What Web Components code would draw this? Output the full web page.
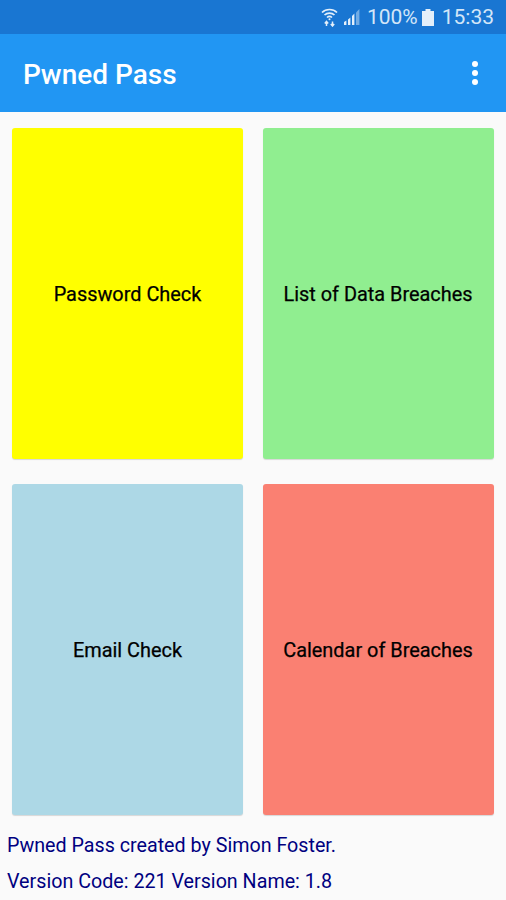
<!DOCTYPE html>
<html>
<head>
<meta charset="utf-8">
<title>Pwned Pass</title>
<style>
html, body { margin: 0; padding: 0; }
body { width: 506px; height: 900px; overflow: hidden; background: #fafafa; font-family: Roboto, sans-serif; }
app-screen { height: 900px; }
</style>
</head>
<body>
<app-screen>
    <status-bar></status-bar>
    <app-bar title="Pwned Pass"></app-bar>
    <card-grid>
        <menu-card color="#ffff00">Password Check</menu-card>
        <menu-card color="#90ee90">List of Data Breaches</menu-card>
        <menu-card color="#add8e6">Email Check</menu-card>
        <menu-card color="#fa8072">Calendar of Breaches</menu-card>
    </card-grid>
    <app-footer>
        <span>Pwned Pass created by Simon Foster.</span>
        <span>Version Code: 221 Version Name: 1.8</span>
    </app-footer>
</app-screen>
<script>
class AppScreen extends HTMLElement {
    constructor() {
        super();
        this.attachShadow({ mode: 'open' });
        this.shadowRoot.innerHTML = `
<style>
:host { display: flex; flex-direction: column; }
</style>
<slot></slot>`;
    }
}

class StatusBar extends HTMLElement {
    constructor() {
        super();
        this.attachShadow({ mode: 'open' });
        this.shadowRoot.innerHTML = `
<style>
:host {
    display: flex;
    align-items: center;
    justify-content: flex-end;
    height: 34px;
    flex: none;
    background: #1976d2;
    color: #d3e6f8;
    font-size: 21px;
    padding-right: 12px;
}
svg { display: block; flex: none; }
.wifi { margin-right: 6px; }
.signal { margin-right: 6px; }
.battery { margin: 0 8px 0 4px; }
</style>
<svg class="wifi" width="17" height="20" viewBox="0 0 17 20" fill="none" stroke="#e3effa" stroke-width="1.7">
    <path d="M1 5.5 C5 1.5 12 1.5 16 5.5"/>
    <path d="M3.5 8 C6.2 5.4 10.8 5.4 13.5 8"/>
    <path d="M6 10.5 C7.4 9.2 9.6 9.2 11 10.5"/>
    <circle cx="8.5" cy="12.3" r="1" fill="#e3effa" stroke="none"/>
    <path d="M5.5 14.5 V19 M3.8 16.5 L5.5 14.5 L7.2 16.5 M11.5 14.5 V19 M9.8 17 L11.5 19 L13.2 17" stroke-width="1.5"/>
</svg>
<svg class="signal" width="17" height="16" viewBox="0 0 17 16" fill="#e3effa">
    <path d="M0 13 L2.4 11.5 V16 H0 Z"/>
    <path d="M4 10.5 L6.4 8.5 V16 H4 Z"/>
    <path d="M8 7 L10.4 4.5 V16 H8 Z"/>
    <path d="M12 3.5 L15.4 0 V16 H12 Z" opacity="0.45"/>
</svg>
<span>100%</span>
<svg class="battery" width="12" height="17" viewBox="0 0 12 17" fill="#e3effa">
    <path d="M3.5 0 H8.5 V2 H12 V17 H0 V2 H3.5 Z"/>
</svg>
<span>15:33</span>`;
    }
}

class AppBar extends HTMLElement {
    constructor() {
        super();
        this.attachShadow({ mode: 'open' });
        this.shadowRoot.innerHTML = `
<style>
:host {
    display: flex;
    align-items: center;
    justify-content: space-between;
    height: 78px;
    flex: none;
    background: #2196f3;
    color: #fff;
    padding: 0 28px 0 23px;
}
.title { font-size: 28px; font-weight: 500; padding-top: 3px; }
.dots { display: flex; flex-direction: column; gap: 3px; margin-top: -1px; }
.dots i { display: block; width: 6px; height: 6px; border-radius: 50%; background: #fff; }
</style>
<span class="title"></span>
<div class="dots"><i></i><i></i><i></i></div>`;
        this.shadowRoot.querySelector('.title').textContent = this.getAttribute('title') || '';
    }
}

class CardGrid extends HTMLElement {
    constructor() {
        super();
        this.attachShadow({ mode: 'open' });
        this.shadowRoot.innerHTML = `
<style>
:host {
    display: grid;
    grid-template-columns: 231px 231px;
    grid-template-rows: 331px 331px;
    column-gap: 19.5px;
    row-gap: 25px;
    padding: 16px 12px 0;
    flex: none;
}
</style>
<slot></slot>`;
    }
}

class MenuCard extends HTMLElement {
    constructor() {
        super();
        this.attachShadow({ mode: 'open' });
        this.shadowRoot.innerHTML = `
<style>
:host {
    display: flex;
    align-items: center;
    justify-content: center;
    box-sizing: border-box;
    padding-top: 2px;
    border-radius: 3px;
    box-shadow: 0 1px 1px rgba(0, 0, 0, 0.14);
    color: #000;
    font-size: 19.9px;
    font-weight: 400;
    -webkit-text-stroke: 0.25px #000;
}
</style>
<slot></slot>`;
        this.style.background = this.getAttribute('color');
    }
}

class AppFooter extends HTMLElement {
    constructor() {
        super();
        this.attachShadow({ mode: 'open' });
        this.shadowRoot.innerHTML = `
<style>
:host {
    display: flex;
    flex-direction: column;
    gap: 12.5px;
    padding: 19px 0 0 7px;
    color: #000080;
    font-size: 19.7px;
    line-height: 23px;
}
</style>
<slot></slot>`;
    }
}

customElements.define('app-screen', AppScreen);
customElements.define('status-bar', StatusBar);
customElements.define('app-bar', AppBar);
customElements.define('card-grid', CardGrid);
customElements.define('menu-card', MenuCard);
customElements.define('app-footer', AppFooter);
</script>
</body>
</html>
